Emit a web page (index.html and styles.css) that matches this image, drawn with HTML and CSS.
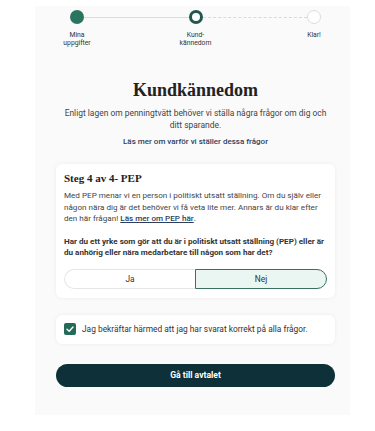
FILE: index.html
```html
<!DOCTYPE html>
<html lang="sv">
<head>
<meta charset="utf-8">
<link rel="stylesheet" href="styles.css">
</head>
<body>
<div class="panel">
  <div class="stepper">
    <div class="track">
      <span class="dot done"></span>
      <span class="line solid"></span>
      <span class="dot current"></span>
      <span class="line dashed"></span>
      <span class="dot todo"></span>
    </div>
    <div class="labels">
      <span class="label">Mina<br>uppgifter</span>
      <span class="label">Kund-<br>kännedom</span>
      <span class="label">Klar!</span>
    </div>
  </div>

  <h1 class="title">Kundkännedom</h1>
  <p class="intro">Enligt lagen om penningtvätt behöver vi ställa några frågor om dig och ditt sparande.</p>
  <a class="more" href="#">Läs mer om varför vi ställer dessa frågor</a>

  <div class="card">
    <h2 class="step">Steg 4 av 4- PEP</h2>
    <p class="text">Med PEP menar vi en person i politiskt utsatt ställning. Om du själv eller någon nära dig är det behöver vi få veta lite mer. Annars är du klar efter den här frågan! <a class="pep" href="#">Läs mer om PEP här</a>.</p>
    <p class="question">Har du ett yrke som gör att du är i politiskt utsatt ställning (PEP) eller är du anhörig eller nära medarbetare till någon som har det?</p>
    <div class="toggle">
      <button class="opt yes">Ja</button>
      <button class="opt no">Nej</button>
    </div>
  </div>

  <div class="card confirm">
    <span class="check"><svg viewBox="0 0 12 12" width="12" height="12"><path d="M3 6.2 L5.2 8.3 L9 4" fill="none" stroke="#fff" stroke-width="1.4" stroke-linecap="round" stroke-linejoin="round"/></svg></span>
    <span class="confirm-text">Jag bekräftar härmed att jag har svarat korrekt på alla frågor.</span>
  </div>

  <button class="cta">Gå till avtalet</button>
</div>
</body>
</html>
```

FILE: styles.css
```css
* { box-sizing: border-box; }
html, body { margin: 0; padding: 0; background: #fff; }
body {
  font-family: Roboto, "Liberation Sans", sans-serif;
  color: #333;
  width: 375px;
  height: 431px;
  overflow: hidden;
}
.panel {
  margin: 6px 25px 0 35px;
  height: 409px;
  background: #fafafa;
  display: flex;
  flex-direction: column;
  align-items: stretch;
  padding: 4px 15px 0 21px;
}
.stepper {
  display: flex;
  flex-direction: column;
}
.track {
  display: flex;
  align-items: center;
  margin: 0 14px 0 14px;
  height: 14px;
}
.dot {
  width: 14px;
  height: 14px;
  border-radius: 50%;
  flex: none;
}
.dot.done { background: #2b7560; }
.dot.current { background: #fff; border: 3px solid #23574b; }
.dot.todo { background: #fff; border: 1.5px solid #dcdcdc; }
.line { flex: 1; height: 0; }
.line.solid { border-top: 1.5px solid #dadada; }
.line.dashed { border-top: 1.5px dashed #dadada; }
.labels {
  display: flex;
  justify-content: space-between;
  margin-top: 7px;
}
.label {
  width: 42px;
  text-align: center;
  font-size: 6.8px;
  line-height: 8px;
  color: #333;
}
.title {
  margin: 32px 0 0;
  text-align: center;
  font-family: "Liberation Serif", "DejaVu Serif", serif;
  font-weight: bold;
  font-size: 18px;
  line-height: 22px;
  color: #222;
}
.intro {
  margin: 6px 6px 0;
  text-align: center;
  font-size: 8.45px;
  line-height: 12px;
  color: #444;
}
.more {
  margin-top: 5px;
  text-align: center;
  font-size: 8px;
  line-height: 12px;
  font-weight: 500;
  color: #2e3e5c;
  text-decoration: none;
}
.card {
  background: #fff;
  border-radius: 6px;
  box-shadow: 0 0 4px rgba(0,0,0,0.06);
  margin-top: 16px;
  padding: 7px 8px 9px;
}
.step {
  margin: 0;
  font-family: "Liberation Serif", "DejaVu Serif", serif;
  font-weight: bold;
  font-size: 11px;
  line-height: 14px;
  color: #222;
}
.text {
  margin: 5px 0 0;
  font-size: 8.1px;
  line-height: 11.5px;
  color: #444;
}
.pep { color: #2e3e5c; font-weight: 500; }
.question {
  margin: 11px 0 0;
  font-size: 8.1px;
  line-height: 11.5px;
  font-weight: bold;
  color: #333;
}
.toggle {
  display: flex;
  margin-top: 10px;
}
.opt {
  flex: 1;
  height: 20px;
  font-family: Roboto, "Liberation Sans", sans-serif;
  font-size: 8.4px;
  color: #333;
  padding: 0;
}
.opt.yes {
  background: #fff;
  border: 1px solid #e6e6e6;
  border-right: none;
  border-radius: 10px 0 0 10px;
}
.opt.no {
  background: #e9f6f1;
  border: 1px solid #3c6e62;
  border-radius: 0 10px 10px 0;
}
.confirm {
  margin-top: 17px;
  display: flex;
  align-items: center;
  gap: 6px;
  height: 29px;
  padding: 0 8px;
}
.check {
  width: 12px;
  height: 12px;
  border-radius: 2px;
  background: #246a58;
  display: flex;
  align-items: center;
  justify-content: center;
}
.confirm-text {
  font-size: 8.4px;
  color: #333;
}
.cta {
  margin-top: 20px;
  height: 23px;
  border: none;
  border-radius: 12px;
  background: #0e3039;
  color: #fff;
  font-family: Roboto, "Liberation Sans", sans-serif;
  font-weight: bold;
  font-size: 8.6px;
}
```
